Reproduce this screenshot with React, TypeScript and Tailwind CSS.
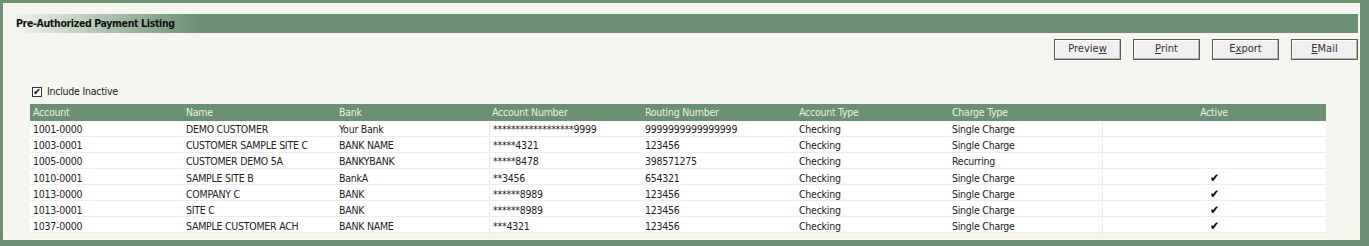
import React from "react";

const rows = [
  ["1001-0000", "DEMO CUSTOMER", "Your Bank", "******************9999", "9999999999999999", "Checking", "Single Charge", false],
  ["1003-0001", "CUSTOMER SAMPLE SITE C", "BANK NAME", "*****4321", "123456", "Checking", "Single Charge", false],
  ["1005-0000", "CUSTOMER DEMO 5A", "BANKYBANK", "*****8478", "398571275", "Checking", "Recurring", false],
  ["1010-0001", "SAMPLE SITE B", "BankA", "**3456", "654321", "Checking", "Single Charge", true],
  ["1013-0000", "COMPANY C", "BANK", "******8989", "123456", "Checking", "Single Charge", true],
  ["1013-0001", "SITE C", "BANK", "******8989", "123456", "Checking", "Single Charge", true],
  ["1037-0000", "SAMPLE CUSTOMER ACH", "BANK NAME", "***4321", "123456", "Checking", "Single Charge", true],
] as const;

const headers = ["Account", "Name", "Bank", "Account Number", "Routing Number", "Account Type", "Charge Type"];

function Btn({ children }: { children: React.ReactNode }) {
  return (
    <div className="w-[67px] h-[21px] border border-[#5a5a5a] bg-[#efefef] flex items-center justify-center text-[11px] text-[#333] shadow-[inset_-1px_-1px_0_#b8b8b8,inset_1px_1px_0_#ffffff]">
      {children}
    </div>
  );
}

export default function App() {
  return (
    <div
      className="w-[1369px] h-[246px] bg-[#6b9073] pt-[3px] pl-[3px] pr-[9px] pb-[6px]"
      style={{ fontFamily: '"DejaVu Sans Condensed", "DejaVu Sans", sans-serif', fontStretch: "condensed" }}
    >
      <div className="w-full h-full border border-[#fbf8dd] bg-[#f4f5ef] pt-[10px] pl-[8px] pr-[2px] flex flex-col">
        <div className="h-[19px] w-[1346px] flex items-center pl-[4px] bg-gradient-to-r from-[#f4f5ef] via-[#6b9073] via-[14%] to-[#6b9073]">
          <span className="text-[10.5px] font-bold text-[#111] tracking-[-0.35px]">Pre-Authorized Payment Listing</span>
        </div>
        <div className="flex justify-end gap-[12px] w-[1346px] mt-[6px]">
          <Btn>Previe<u>w</u></Btn>
          <Btn><u>P</u>rint</Btn>
          <Btn>E<u>x</u>port</Btn>
          <Btn><u>E</u>Mail</Btn>
        </div>
        <div className="flex items-center mt-[26px] ml-[20px] h-[12px]">
          <div className="w-[10px] h-[10px] border border-[#333] bg-white flex items-center justify-center text-[10px] leading-none text-black">✔</div>
          <span className="ml-[5px] text-[10.5px] text-[#222] tracking-[-0.25px]">Include Inactive</span>
        </div>
        <div className="ml-[18px] mt-[6px] w-[1296px]">
          <div className="grid grid-cols-[153px_153px_153px_153px_154px_153px_153px_224px] h-[17px] bg-[#6b9073] items-center text-[10.5px] text-[#e6efe6] tracking-[-0.25px]">
            {headers.map((h) => (
              <div key={h} className="pl-[3px]">{h}</div>
            ))}
            <div className="text-center">Active</div>
          </div>
          {rows.map((r, i) => (
            <div
              key={i}
              className="grid grid-cols-[153px_153px_153px_153px_154px_153px_153px_224px] h-[16px] bg-white border-b border-[#ececec] text-[10.5px] text-[#222] tracking-[-0.25px]"
            >
              {r.slice(0, 7).map((c, j) => (
                <div key={j} className={`h-full flex items-center pl-[3px] pt-[1px] ${j === 3 ? "border-l border-[#ececec]" : ""}`}>
                  {c as string}
                </div>
              ))}
              <div className="h-full flex items-center justify-center border-l border-[#ececec] text-[12px] text-black">
                {r[7] ? "✔" : ""}
              </div>
            </div>
          ))}
        </div>
      </div>
    </div>
  );
}
